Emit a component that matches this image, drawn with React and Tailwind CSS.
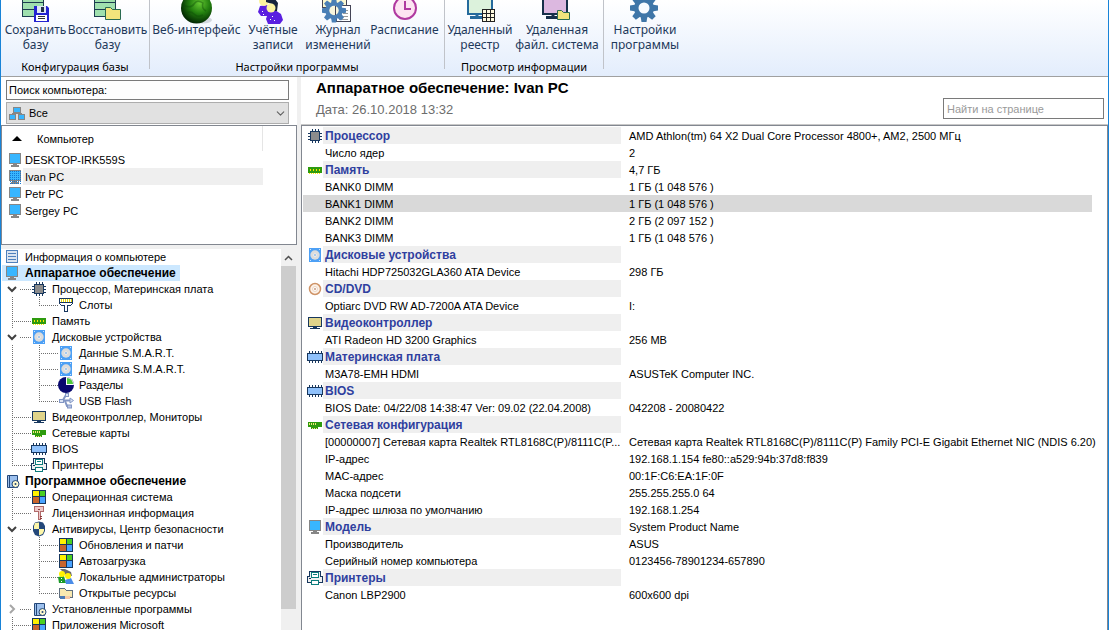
import clsx from "clsx";
import { ChevronDown } from "lucide-react";

function MonitorIcon({ selected }) {
  return (
    <svg width="16" height="16" viewBox="0 0 16 16" shapeRendering="crispEdges" className="shrink-0">
      <path d="M2 1h12v11h-4v1h2v2H4v-2h2v-1H2z" fill="#868686" />
      <rect x="3" y="2" width="10" height="9" fill="#38b6ff" />
      {selected && (
        <path
          d="M3 2.5h11M3 4.5h11M3 6.5h11M3 8.5h11M3 10.5h11M3 12.5h11M3 14.5h11"
          stroke="#1478d2"
          strokeDasharray="1 1"
        />
      )}
    </svg>
  );
}

function SheetIcon() {
  return (
    <svg width="16" height="16" viewBox="0 0 16 16" shapeRendering="crispEdges" className="shrink-0">
      <rect x="2.5" y="1.5" width="11" height="12" fill="#dbe5f1" stroke="#4f81bd" />
      <path d="M4 4.5h8M4 7.5h8M4 10.5h8" stroke="#4f81bd" />
    </svg>
  );
}

function CpuIcon() {
  return (
    <svg width="16" height="16" viewBox="0 0 16 16" shapeRendering="crispEdges" className="shrink-0">
      <path
        d="M5.5 1v14M8.5 1v14M11.5 1v14M1 5.5h14M1 8.5h14M1 11.5h14"
        stroke="#17375e"
      />
      <rect x="3.5" y="3.5" width="9" height="9" fill="#8c8c8c" stroke="#17375e" />
    </svg>
  );
}

function SlotIcon() {
  return (
    <svg width="16" height="16" viewBox="0 0 16 16" shapeRendering="crispEdges" className="shrink-0">
      <path d="M1.5 1.5h13v5l-2 2h-3v6h-3v-6h-3l-2-2z" fill="#fff" stroke="#17375e" />
      <path d="M3.5 2v3M5.5 2v3M7.5 2v3M9.5 2v3M11.5 2v3M13.5 2v3" stroke="#e8d800" />
      <path d="M2 5.5h12" stroke="#17375e" />
    </svg>
  );
}

function MemoryIcon() {
  return (
    <svg width="16" height="16" viewBox="0 0 16 16" shapeRendering="crispEdges" className="shrink-0">
      <rect x="1" y="5" width="14" height="6" fill="#2e9b0e" />
      <path d="M3.5 7v2M6.5 7v2M9.5 7v2M12.5 7v2" stroke="#ffe500" />
      <path d="M2 11.5h12" stroke="#ffe500" strokeDasharray="1 1" />
    </svg>
  );
}

function DiskIcon() {
  return (
    <svg width="16" height="16" viewBox="0 0 16 16" className="shrink-0">
      <rect x="2" y="1" width="12" height="14" fill="#4da0f5" />
      <circle cx="8" cy="8" r="4.7" fill="#dcdcdc" />
      <circle cx="8" cy="8" r="1.5" fill="#fff" />
      <circle cx="8" cy="8" r="0.8" fill="#3a86d8" />
      <path d="M3 2h1v1H3zM12 2h1v1h-1zM3 13h1v1H3zM12 13h1v1h-1z" fill="#cfe4fb" />
    </svg>
  );
}

function CdIcon() {
  return (
    <svg width="16" height="16" viewBox="0 0 16 16" className="shrink-0">
      <circle cx="8" cy="8" r="5.5" fill="#fdf3ea" stroke="#cf9468" strokeWidth="1.5" />
      <circle cx="8" cy="8" r="2.5" fill="#fff" stroke="#ecd5c2" />
      <circle cx="8" cy="8" r="0.8" fill="#a0522d" />
    </svg>
  );
}

function PieIcon() {
  return (
    <svg width="16" height="16" viewBox="0 0 16 16" className="shrink-0">
      <circle cx="8" cy="8" r="8" fill="#08086e" />
      <path d="M8 8V0a8 8 0 0 1 8 8z" fill="#fff" />
      <path d="M9 7V1a6 6 0 0 1 6 6z" fill="#4ec83c" />
    </svg>
  );
}

function UsbIcon() {
  return (
    <svg width="16" height="16" viewBox="0 0 16 16" fill="none" stroke="#8296c4" className="shrink-0">
      <path d="M3 7.5h10M5 7l3-5M7 8l2 5h2" strokeWidth="2" />
      <rect x="1.5" y="6.5" width="4" height="3" fill="#dbe3f3" />
      <rect x="7.5" y="0.5" width="3" height="3" fill="#dbe3f3" />
      <rect x="9.5" y="12" width="4" height="3" fill="#b4c2e2" />
      <path d="M12 5l3.500 2.500L12 10z" fill="#dbe3f3" />
    </svg>
  );
}

function VideoIcon() {
  return (
    <svg width="16" height="16" viewBox="0 0 16 16" shapeRendering="crispEdges" className="shrink-0">
      <rect x="1.5" y="2.5" width="13" height="9" fill="#e0d48a" stroke="#17375e" />
      <path d="M6 12.5h4M3 13.5h10" stroke="#17375e" />
    </svg>
  );
}

function NetworkCardIcon() {
  return (
    <svg width="16" height="16" viewBox="0 0 16 16" shapeRendering="crispEdges" className="shrink-0">
      <path d="M1 5h14v5h-4v2H4v-2H1z" fill="#2e9b0e" />
      <path d="M2 7h8" stroke="#f4e87a" strokeWidth="2" strokeDasharray="1 1" />
      <path d="M5 11.5h5" stroke="#f4e87a" strokeDasharray="1 1" />
    </svg>
  );
}

function ChipIcon() {
  return (
    <svg width="16" height="16" viewBox="0 0 16 16" shapeRendering="crispEdges" className="shrink-0">
      <path d="M2 3.5h13M2 12.5h13" stroke="#17375e" strokeWidth="3" strokeDasharray="1 2" />
      <rect x="0.5" y="4.5" width="15" height="7" fill="#8fc1fb" stroke="#17375e" />
    </svg>
  );
}

function PrinterIcon() {
  return (
    <svg width="16" height="16" viewBox="0 0 16 16" shapeRendering="crispEdges" className="shrink-0">
      <path d="M.5 12.5v-6h2v-5h11v5h2v6z" fill="#f0f0f0" stroke="#17375e" />
      <path d="M4.5 2.5h7v5h-7zM6 4.500h4" fill="#fff" stroke="#0c7d7d" />
      <rect x="4.500" y="10.5" width="7" height="4" fill="#fff" stroke="#0c7d7d" />
      <path d="M2 8.5h2" stroke="#17375e" />
    </svg>
  );
}

function SoftwareIcon() {
  return (
    <svg width="16" height="16" viewBox="0 0 16 16" className="shrink-0">
      <path d="M3.5 2.5h10v12h-10z" fill="#9cc0ee" stroke="#24487a" />
      <path d="M5.5 2v12" stroke="#24487a" />
      <circle cx="11.5" cy="11" r="3.5" fill="#fdf8cc" stroke="#24487a" />
      <circle cx="11.5" cy="11" r="1" fill="#24487a" />
    </svg>
  );
}

function WindowsIcon() {
  return (
    <svg width="16" height="16" viewBox="0 0 16 16" shapeRendering="crispEdges" className="shrink-0">
      <rect x="1" y="1" width="14" height="14" fill="#17375e" />
      <rect x="2" y="2" width="6" height="5" fill="#fff200" />
      <rect x="9" y="2" width="5" height="5" fill="#4bd021" />
      <rect x="2" y="8" width="6" height="6" fill="#c8642c" />
      <rect x="9" y="8" width="5" height="6" fill="#4aa3ff" />
    </svg>
  );
}

function KeyIcon() {
  return (
    <svg width="16" height="16" viewBox="0 0 16 16" shapeRendering="crispEdges" className="shrink-0">
      <path d="M3.5 1.5h9v5h-3v8h-2v-8h-4z" fill="#eecaca" stroke="#b06a6a" />
      <path d="M7 4h2M9 11.5h2M9 13.5h2" stroke="#8e3c3c" />
    </svg>
  );
}

function ShieldIcon() {
  return (
    <svg width="16" height="16" viewBox="0 0 16 16" className="shrink-0">
      <path d="M4 1.500L8 .5l4 1L14 5v5l-2 4-4 1.500L4 14l-2-4V5z" fill="#24487a" />
      <path d="M8 1.500V8H3V5l1-3zM8 8h5v2l-1.500 3L8 14.500z" fill="#fdf6a8" />
    </svg>
  );
}

function UsersIcon() {
  return (
    <svg width="16" height="16" viewBox="0 0 16 16" className="shrink-0">
      <path d="M2 0h5l6 3 1 4-6-1z" fill="#6b6b6b" />
      <path d="M0 8l6-1 2 7H1z" fill="#1c9a28" />
      <path d="M7 11l6-2 3 6H8z" fill="#4a8ce8" />
      <circle cx="4" cy="5" r="3" fill="#fff200" />
      <circle cx="10" cy="7" r="3" fill="#fff200" />
      <path d="M3 9h1v1H3zM3 12h1v1H3z" fill="#fff" />
    </svg>
  );
}

function SharedFolderIcon() {
  return (
    <svg width="16" height="16" viewBox="0 0 16 16" shapeRendering="crispEdges" className="shrink-0">
      <path d="M1.5 3.5h5l2 2h6v7h-13z" fill="#f8e9b0" stroke="#5f6f7f" />
      <path d="M2 11h5v3H2z" fill="#4a7ab5" />
      <path d="M7 11h6l-1 3H7z" fill="#f5c9a6" />
    </svg>
  );
}

function GroupIcon() {
  return (
    <svg width="16" height="13" viewBox="0 0 16 13" shapeRendering="crispEdges" className="shrink-0">
      <path d="M8 5v2M3.5 8V6.5h9V8" fill="none" stroke="#868686" />
      <rect x="4.5" y="0.5" width="7" height="5" fill="#38b6ff" stroke="#868686" />
      <rect x="0.5" y="7.5" width="6" height="5" fill="#38b6ff" stroke="#868686" />
      <rect x="9.5" y="7.5" width="6" height="5" fill="#38b6ff" stroke="#868686" />
    </svg>
  );
}

// Ribbon icons are cut by the top of the window, only the lower 24px shows.
function RibbonIcon({ children }) {
  return (
    <svg width="32" height="24" viewBox="0 0 32 24" className="shrink-0 -mb-0.5">
      {children}
    </svg>
  );
}

function Server() {
  return (
    <g fill="#9fe0ae" stroke="#1d3c50">
      <rect x="2.5" y="-5.5" width="21" height="8" />
      <rect x="2.5" y="2.5" width="21" height="7" />
      <rect x="2.5" y="9.5" width="21" height="7" />
    </g>
  );
}

function SaveBaseIcon() {
  return (
    <RibbonIcon>
      <Server />
      <path d="M14 6h13l2 2v14H14z" fill="#2323d0" />
      <path d="M17 6h9v7h-9z" fill="#dfe6f5" />
      <path d="M21 7h3v5h-3z" fill="#22304a" />
      <path d="M16 15h11v6H16z" fill="#fff" />
      <path d="M18 16.5h7M18 18.5h7" stroke="#333" />
    </RibbonIcon>
  );
}

function RestoreBaseIcon() {
  return (
    <RibbonIcon>
      <Server />
      <path d="M13.5 19.5v-12h5l2 2h8v10z" fill="#f2e47c" stroke="#2a6a50" />
    </RibbonIcon>
  );
}

function GlobeIcon() {
  return (
    <RibbonIcon>
      <defs>
        <radialGradient id="globe" cx="0.6" cy="0.35" r="0.65">
          <stop offset="0" stopColor="#64c832" />
          <stop offset="0.5" stopColor="#23800f" />
          <stop offset="1" stopColor="#032a03" />
        </radialGradient>
      </defs>
      <ellipse cx="22" cy="20" rx="9" ry="3.5" fill="#d3d8de" />
      <circle cx="15.500" cy="8" r="15.5" fill="url(#globe)" />
      <path
        d="M2 5q8 4 11-1t9-1q-2 5 3 8M4 14q5-4 9 0t9 1"
        stroke="#0c4a08"
        strokeWidth="1.5"
        fill="none"
        opacity="0.4"
      />
    </RibbonIcon>
  );
}

function AccountsIcon() {
  return (
    <RibbonIcon>
      <path d="M3 6l7-1 5 5-4 6H4l-3-4z" fill="#5a1fe0" />
      <path d="M11 13l7-3 6 4 2 6-3 4H11l-2-5z" fill="#5a1fe0" />
      <circle cx="7" cy="1" r="5" fill="#fbf3a0" />
      <path d="M9-1h9l3 4-1 8h-3l-2-7-6-2z" fill="#16243c" />
      <circle cx="14" cy="8" r="4.5" fill="#fbf3a0" />
      <path d="M5 11h1v1H5zM6 14h1v1H6zM15 16h1v1h-1zM17 20h1v1h-1zM13 19h1v1h-1z" fill="#fff" />
    </RibbonIcon>
  );
}

function Gear({ cx, cy, r, fill, hole }) {
  return (
    <g transform={`translate(${cx} ${cy}) scale(${r / 14})`}>
      {[0, 45, 90, 135, 180, 225, 270, 315].map((angle) => (
        <path key={angle} d="M-3.5-8L-2.5-14h5L3.5-8z" fill={fill} transform={`rotate(${angle})`} />
      ))}
      <circle r="10" fill={fill} />
      <circle r="5.5" fill={hole} />
    </g>
  );
}

function JournalIcon() {
  return (
    <RibbonIcon>
      <rect x="0.5" y="-6.5" width="24" height="14" fill="#fbf8d0" stroke="#445" />
      <rect x="14.5" y="5.5" width="14" height="16" fill="#fff" stroke="#445" />
      <path d="M21 10.5h5M21 13.5h5M19 16.5h7M17 19.5h9" stroke="#999" />
      <Gear cx={12} cy={10.5} r={12} fill="#4a7fb5" hole="#f8f6dc" />
      <path d="M13.5 6v9" stroke="#445" />
    </RibbonIcon>
  );
}

function ClockIcon() {
  return (
    <RibbonIcon>
      <circle cx="16" cy="8" r="11" fill="#fde4f2" stroke="#b03aa0" strokeWidth="2" />
      <path d="M16 1v8h6" stroke="#b03aa0" strokeWidth="2" fill="none" />
    </RibbonIcon>
  );
}

function RemoteRegistryIcon() {
  return (
    <RibbonIcon>
      <rect x="4" y="-6" width="24" height="20" fill="#dcf2dc" stroke="#256a9c" strokeWidth="2" />
      <path d="M13 14v4M6 17.5h12" stroke="#256a9c" strokeWidth="3" />
      <rect x="18.5" y="9.5" width="12" height="12" fill="#fffbe0" stroke="#222" />
      <path d="M22.5 9v13M26.5 9v13M18 13.5h13M18 17.5h13" stroke="#222" />
    </RibbonIcon>
  );
}

function RemoteFilesIcon() {
  return (
    <RibbonIcon>
      <rect x="2" y="-6" width="24" height="20" fill="#dcb8e0" stroke="#17304a" strokeWidth="2" />
      <path d="M12 14v4M5 17.5h12" stroke="#17304a" strokeWidth="3" />
      <path d="M16.5 19.5v-9h4l2 2h6v7z" fill="#f2e47c" stroke="#2a6a50" />
    </RibbonIcon>
  );
}

function SettingsIcon() {
  return (
    <RibbonIcon>
      <Gear cx={15} cy={8} r={14} fill="#3f76a8" hole="#f8fbff" />
    </RibbonIcon>
  );
}

const ribbonGroups = [
  {
    title: "Конфигурация базы",
    className: "w-[148px]",
    buttons: [
      { icon: SaveBaseIcon, lines: ["Сохранить", "базу"], className: "w-[69px]" },
      { icon: RestoreBaseIcon, lines: ["Восстановить", "базу"], className: "w-[75px]" },
    ],
  },
  {
    title: "Настройки программы",
    className: "w-[294px]",
    buttons: [
      { icon: GlobeIcon, lines: ["Веб-интерфейс"], className: "w-[93px]" },
      { icon: AccountsIcon, lines: ["Учётные", "записи"], className: "w-[60px]" },
      { icon: JournalIcon, lines: ["Журнал", "изменений"], className: "w-[70px]" },
      { icon: ClockIcon, lines: ["Расписание"], className: "w-[63px]" },
    ],
  },
  {
    title: "Просмотр информации",
    className: "w-[158px]",
    buttons: [
      { icon: RemoteRegistryIcon, lines: ["Удаленный", "реестр"], className: "w-[70px]" },
      { icon: RemoteFilesIcon, lines: ["Удаленная", "файл. система"], className: "w-[84px]" },
    ],
  },
];

function RibbonButton({ icon: Icon, lines, className }) {
  return (
    <button
      type="button"
      className={clsx(
        "flex flex-col items-center shrink-0 whitespace-nowrap leading-[15px] text-[#1e395b]",
        className,
      )}
    >
      <Icon />
      {lines.map((line) => (
        <span key={line}>{line}</span>
      ))}
    </button>
  );
}

function Ribbon() {
  return (
    <header className="flex items-start h-[77px] shrink-0 border-b border-[#a0a0a0] bg-linear-to-b from-white to-[#e3edfc] font-['Noto_Sans',sans-serif] text-[12px] overflow-hidden">
      {ribbonGroups.map((group) => (
        <div key={group.title} className="flex shrink-0">
          <section className={group.className}>
            <div className="flex h-[60px] items-start">
              {group.buttons.map((button) => (
                <RibbonButton key={button.lines.join(" ")} {...button} />
              ))}
            </div>
            <h2 className="text-center text-[11px] leading-[14px] text-black">{group.title}</h2>
          </section>
          <div className="w-px h-[69px] bg-[#c0c3c9]" />
        </div>
      ))}
      <RibbonButton icon={SettingsIcon} lines={["Настройки", "программы"]} className="w-[82px]" />
    </header>
  );
}

const computers = ["DESKTOP-IRK559S", "Ivan PC", "Petr PC", "Sergey PC"];

function ComputerList() {
  return (
    <div className="flex flex-col h-[120px] shrink-0 border border-[#828790] bg-white">
      <button
        type="button"
        className="flex items-center w-[261px] h-[25px] pl-[10px] gap-[15px] border-r border-[#e5e5e5]"
      >
        <svg width="10" height="5" viewBox="0 0 10 5">
          <path d="M5 0l5 5H0z" fill="#000" />
        </svg>
        Компьютер
      </button>
      <ul className="w-[261px]">
        {computers.map((name) => {
          const selected = name === "Ivan PC";
          return (
            <li key={name} className="flex h-[17px] items-center pl-[5px]">
              <MonitorIcon selected={selected} />
              <button
                type="button"
                className={clsx("flex-1 h-full pl-[2px] text-left", selected && "bg-[#efefef]")}
              >
                {name}
              </button>
            </li>
          );
        })}
      </ul>
    </div>
  );
}

// One character of `guides` per 27px column: | line, T branch, L last branch,
// v expanded node, > collapsed node.
const treeRows = [
  { guides: "", icon: SheetIcon, label: "Информация о компьютере" },
  { guides: "", icon: MonitorIcon, label: "Аппаратное обеспечение", bold: true, selected: true },
  { guides: "v", icon: CpuIcon, label: "Процессор, Материнская плата" },
  { guides: "|L", icon: SlotIcon, label: "Слоты" },
  { guides: "T", icon: MemoryIcon, label: "Память" },
  { guides: "v", icon: DiskIcon, label: "Дисковые устройства" },
  { guides: "|T", icon: DiskIcon, label: "Данные S.M.A.R.T." },
  { guides: "|T", icon: DiskIcon, label: "Динамика S.M.A.R.T." },
  { guides: "|T", icon: PieIcon, label: "Разделы" },
  { guides: "|L", icon: UsbIcon, label: "USB Flash" },
  { guides: "T", icon: VideoIcon, label: "Видеоконтроллер, Мониторы" },
  { guides: "T", icon: NetworkCardIcon, label: "Сетевые карты" },
  { guides: "T", icon: ChipIcon, label: "BIOS" },
  { guides: "L", icon: PrinterIcon, label: "Принтеры" },
  { guides: "", icon: SoftwareIcon, label: "Программное обеспечение", bold: true },
  { guides: "T", icon: WindowsIcon, label: "Операционная система" },
  { guides: "T", icon: KeyIcon, label: "Лицензионная информация" },
  { guides: "v", icon: ShieldIcon, label: "Антивирусы, Центр безопасности" },
  { guides: "|T", icon: WindowsIcon, label: "Обновления и патчи" },
  { guides: "|T", icon: WindowsIcon, label: "Автозагрузка" },
  { guides: "|T", icon: UsersIcon, label: "Локальные администраторы" },
  { guides: "|L", icon: SharedFolderIcon, label: "Открытые ресурсы" },
  { guides: ">", icon: SoftwareIcon, label: "Установленные программы" },
  { guides: "T", icon: WindowsIcon, label: "Приложения Microsoft" },
];

const guidePaths = {
  "|": "M8.5 0v16",
  T: "M8.5 0v16M10 8.5h17",
  L: "M8.5 0v9M10 8.5h17",
  v: "M16 8.5h11",
  ">": "M16 8.5h11",
};

function TreeGuide({ kind }) {
  return (
    <svg width="27" height="16" viewBox="0 0 27 16" fill="none" className="shrink-0">
      <path
        d={guidePaths[kind]}
        stroke="#707070"
        strokeDasharray="1 1"
        shapeRendering="crispEdges"
      />
      {kind === "v" && <path d="M4 6l4 4 4-4" stroke="#404040" strokeWidth="2" />}
      {kind === ">" && <path d="M6 4l4 4-4 4" stroke="#a6a6a6" strokeWidth="2" />}
    </svg>
  );
}

function TreeRow({ guides, icon: Icon, label, bold, selected }) {
  return (
    <li className="flex h-[16px] shrink-0">
      <button
        type="button"
        className={clsx(
          "flex items-center pl-[2px] pr-1 whitespace-nowrap",
          bold && "text-[12px] font-bold",
          selected && "bg-[#cce8ff]",
        )}
      >
        {guides.split("").map((kind, index) => (
          <TreeGuide key={index} kind={kind} />
        ))}
        <Icon />
        <span className="pl-[5px]">{label}</span>
      </button>
    </li>
  );
}

function Scrollbar() {
  return (
    <div className="flex flex-col w-[15px] shrink-0 bg-[#f0f0f0]">
      <button type="button" aria-label="Вверх" className="flex h-[17px] items-center justify-center">
        <svg width="9" height="6" viewBox="0 0 9 6" fill="none">
          <path d="M1 5l3.500-3.500L8 5" stroke="#505050" strokeWidth="1.5" />
        </svg>
      </button>
      <div className="h-[343px] bg-[#cdcdcd]" />
    </div>
  );
}

function Sidebar() {
  return (
    <aside className="flex flex-col w-[296px] shrink-0 min-h-0">
      <div className="flex flex-col gap-[2px] bg-white pl-[5px] pr-[8px] pt-[3px] pb-px">
        <input
          type="text"
          aria-label="Поиск компьютера"
          defaultValue="Поиск компьютера:"
          className="h-[20px] px-[2px] border border-[#7a7a7a] bg-[#fdfdfd]"
        />
        <div className="relative flex">
          <select
            aria-label="Группа"
            className="w-full h-[22px] pl-[22px] appearance-none border border-[#adadad] bg-[#e1e1e1]"
          >
            <option>Все</option>
          </select>
          <span className="absolute left-[3px] top-[5px] pointer-events-none">
            <GroupIcon />
          </span>
          <ChevronDown
            size={13}
            strokeWidth={2}
            className="absolute right-[2px] top-[5px] text-[#606060] pointer-events-none"
          />
        </div>
      </div>
      <ComputerList />
      <nav className="flex flex-1 min-h-0 mt-1 pr-px" aria-label="Разделы">
        <ul className="flex flex-col flex-1 min-w-0 overflow-hidden bg-white pl-px">
          {treeRows.map((row) => (
            <TreeRow key={row.label} {...row} />
          ))}
        </ul>
        <Scrollbar />
      </nav>
    </aside>
  );
}

const hardware = [
  {
    icon: CpuIcon,
    title: "Процессор",
    value: "AMD Athlon(tm) 64 X2 Dual Core Processor 4800+, AM2, 2500 МГц",
    items: [["Число ядер", "2"]],
  },
  {
    icon: MemoryIcon,
    title: "Память",
    value: "4,7 ГБ",
    items: [
      ["BANK0 DIMM", "1 ГБ (1 048 576 )"],
      ["BANK1 DIMM", "1 ГБ (1 048 576 )"],
      ["BANK2 DIMM", "2 ГБ (2 097 152 )"],
      ["BANK3 DIMM", "1 ГБ (1 048 576 )"],
    ],
  },
  {
    icon: DiskIcon,
    title: "Дисковые устройства",
    items: [["Hitachi HDP725032GLA360 ATA Device", "298 ГБ"]],
  },
  { icon: CdIcon, title: "CD/DVD", items: [["Optiarc DVD RW AD-7200A ATA Device", "I:"]] },
  { icon: VideoIcon, title: "Видеоконтроллер", items: [["ATI Radeon HD 3200 Graphics", "256 MB"]] },
  { icon: ChipIcon, title: "Материнская плата", items: [["M3A78-EMH HDMI", "ASUSTeK Computer INC."]] },
  {
    icon: ChipIcon,
    title: "BIOS",
    items: [["BIOS Date: 04/22/08 14:38:47 Ver: 09.02 (22.04.2008)", "042208 - 20080422"]],
  },
  {
    icon: NetworkCardIcon,
    title: "Сетевая конфигурация",
    items: [
      [
        "[00000007] Сетевая карта Realtek RTL8168C(P)/8111C(P...",
        "Сетевая карта Realtek RTL8168C(P)/8111C(P) Family PCI-E Gigabit Ethernet NIC (NDIS 6.20)",
      ],
      ["IP-адрес", "192.168.1.154 fe80::a529:94b:37d8:f839"],
      ["MAC-адрес", "00:1F:C6:EA:1F:0F"],
      ["Маска подсети", "255.255.255.0 64"],
      ["IP-адрес шлюза по умолчанию", "192.168.1.254"],
    ],
  },
  {
    icon: MonitorIcon,
    title: "Модель",
    value: "System Product Name",
    items: [
      ["Производитель", "ASUS"],
      ["Серийный номер компьютера", "0123456-78901234-657890"],
    ],
  },
  { icon: PrinterIcon, title: "Принтеры", items: [["Canon LBP2900", "600x600 dpi"]] },
];

function HardwareTable() {
  return (
    <table className="w-full table-fixed border-collapse whitespace-nowrap">
      <colgroup>
        <col className="w-[20px]" />
        <col className="w-[298px]" />
        <col />
      </colgroup>
      {hardware.map(({ icon: Icon, title, value, items }) => (
        <tbody key={title}>
          <tr className="h-[17px]">
            <td className="p-0 pl-[4px]">
              <Icon />
            </td>
            <th
              scope="rowgroup"
              className="p-0 pl-[2px] bg-[#efefef] text-left text-[12px] font-bold text-[#2f3f9f]"
            >
              {title}
            </th>
            <td className="p-0 pl-2">{value}</td>
          </tr>
          {items.map(([name, text]) => (
            <tr key={name} className={clsx("h-[17px]", name === "BANK1 DIMM" && "bg-[#d9d9d9]")}>
              <td className="p-0" />
              <td className="p-0 pl-[2px] overflow-hidden">{name}</td>
              <td className="p-0 pl-2">{text}</td>
            </tr>
          ))}
        </tbody>
      ))}
    </table>
  );
}

function Details() {
  return (
    <main className="flex flex-col flex-1 min-w-0 ml-1 bg-white">
      <div className="flex items-end justify-between h-[48px] shrink-0 pl-[15px] pr-1 border-b border-[#c8c8c8]">
        <div className="flex flex-col h-full">
          <h1 className="text-[15px] leading-[22px] font-bold">Аппаратное обеспечение: Ivan PC</h1>
          <p className="text-[13px] leading-[22px] text-[#6d6d6d]">Дата: 26.10.2018 13:32</p>
        </div>
        <input
          type="search"
          aria-label="Найти на странице"
          placeholder="Найти на странице"
          className="w-[161px] h-[21px] mb-[5px] px-[3px] border border-[#7a7a7a] bg-white placeholder:text-[#9a9a9a]"
        />
      </div>
      <div className="flex-1 min-h-0 overflow-hidden pl-px pt-px pr-[15px] border-l border-t border-r border-[#828790]">
        <HardwareTable />
      </div>
    </main>
  );
}

export default function App() {
  return (
    <div className="flex flex-col h-screen overflow-hidden border-x border-[#1883d7] bg-[#f0f0f0] font-['Liberation_Sans',Arial,sans-serif] text-[11px] leading-[16px] text-black">
      <Ribbon />
      <div className="flex flex-1 min-h-0">
        <Sidebar />
        <Details />
      </div>
    </div>
  );
}
